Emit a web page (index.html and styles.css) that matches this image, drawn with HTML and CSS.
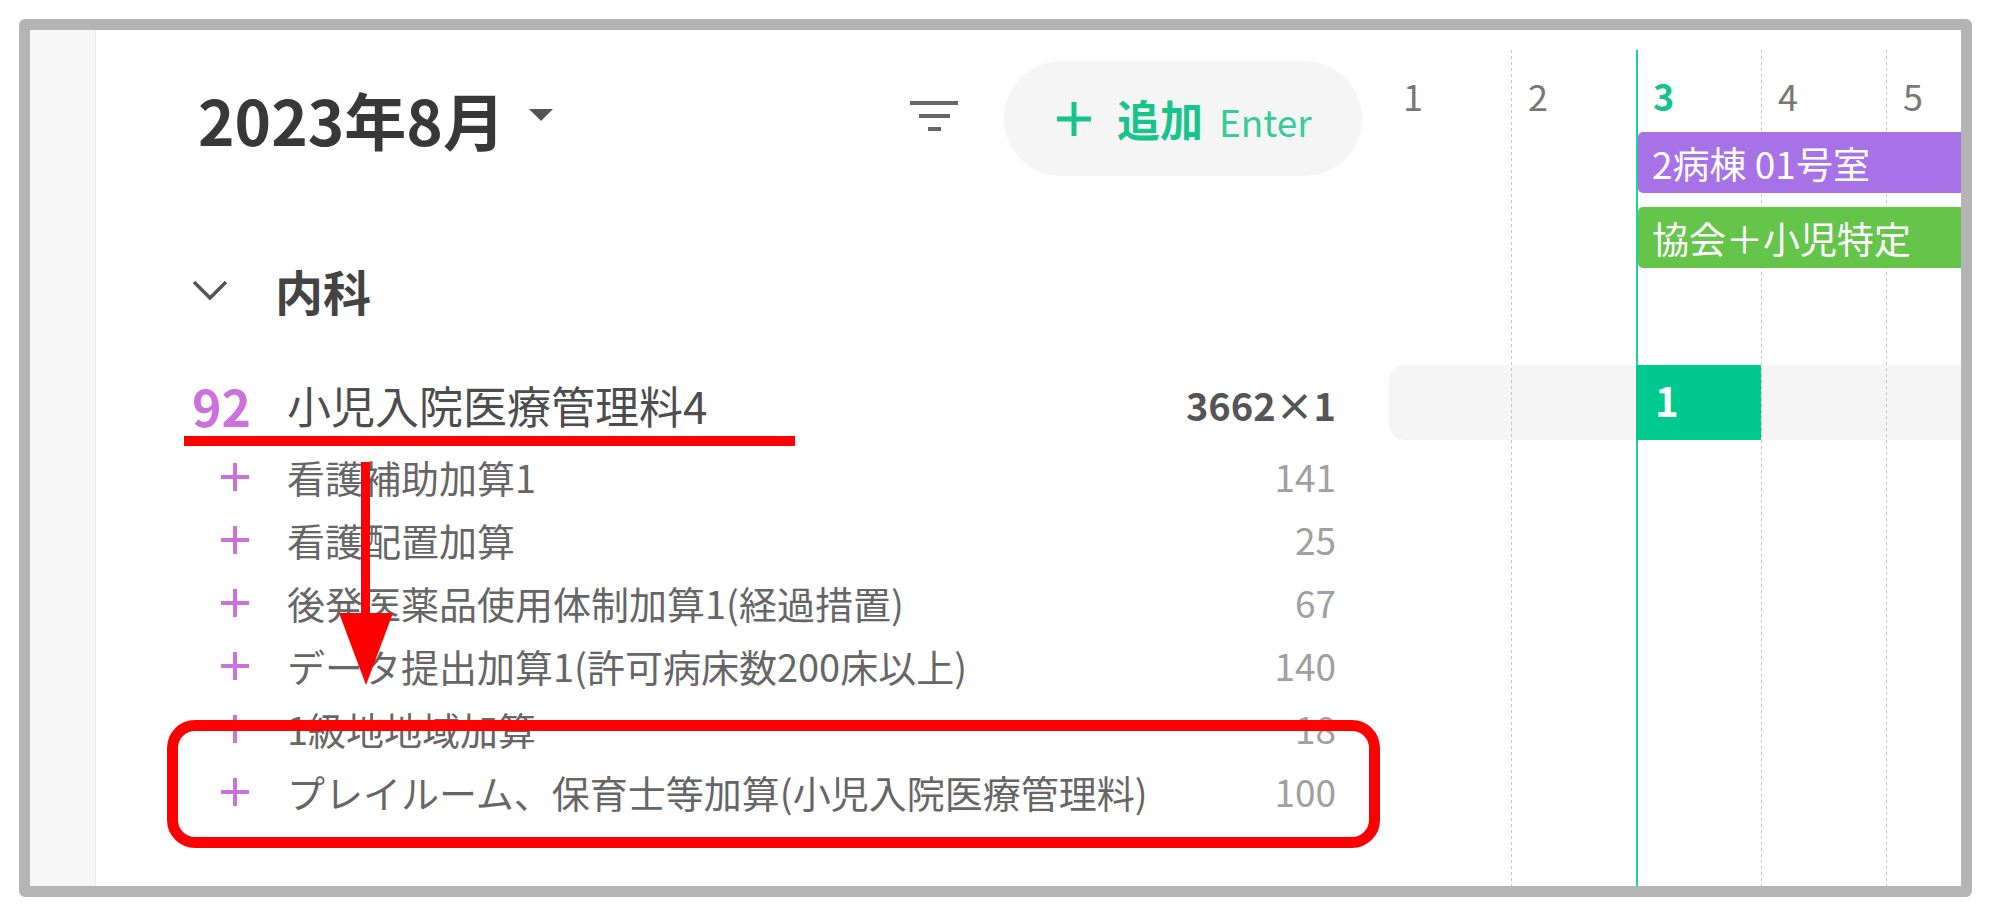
FILE: index.html
```html
<!DOCTYPE html>
<html lang="ja">

<head>
  <meta charset="utf-8">
  <link rel="stylesheet" href="styles.css">
</head>

<body>
  <div class="frame">
    <div class="rail"></div>

    <div class="list">
      <div class="list-header">
        <div class="month">
          <span class="month-label">2023年8月</span>
          <svg class="caret" viewBox="0 0 24 12" width="24" height="12">
            <polygon points="0,0 24,0 12,12" fill="#555" />
          </svg>
        </div>
        <svg class="filter" viewBox="0 0 48 30" width="48" height="30">
          <rect x="0" y="0" width="48" height="4" fill="#666" />
          <rect x="9" y="13" width="31" height="4" fill="#666" />
          <rect x="18" y="26" width="13" height="4" fill="#666" />
        </svg>
        <button class="add-button">
          <svg class="add-plus" viewBox="0 0 38 38" width="38" height="38">
            <path d="M19 2v34M2 19h34" stroke="#18c48c" stroke-width="5" />
          </svg>
          <span class="add-label">追加</span>
          <span class="add-key">Enter</span>
        </button>
      </div>

      <div class="section">
        <svg class="chevron" viewBox="0 0 36 22" width="36" height="22">
          <path d="M2 3l16 16L34 3" fill="none" stroke="#555" stroke-width="3.5" />
        </svg>
        <span class="section-title">内科</span>
      </div>

      <div class="main-row">
        <span class="main-count">92</span>
        <span class="main-name">小児入院医療管理料4</span>
        <span class="main-amount">3662×1</span>
      </div>

      <div class="sub-rows">
        <div class="sub-row">
          <span class="sub-mark"><svg viewBox="0 0 30 30" width="30" height="30"><path d="M15 1v28M1 15h28" stroke="#cc70dc" stroke-width="4" /></svg></span>
          <span class="sub-name">看護補助加算1</span>
          <span class="sub-amount">141</span>
        </div>
        <div class="sub-row">
          <span class="sub-mark"><svg viewBox="0 0 30 30" width="30" height="30"><path d="M15 1v28M1 15h28" stroke="#cc70dc" stroke-width="4" /></svg></span>
          <span class="sub-name">看護配置加算</span>
          <span class="sub-amount">25</span>
        </div>
        <div class="sub-row">
          <span class="sub-mark"><svg viewBox="0 0 30 30" width="30" height="30"><path d="M15 1v28M1 15h28" stroke="#cc70dc" stroke-width="4" /></svg></span>
          <span class="sub-name">後発医薬品使用体制加算1(経過措置)</span>
          <span class="sub-amount">67</span>
        </div>
        <div class="sub-row">
          <span class="sub-mark"><svg viewBox="0 0 30 30" width="30" height="30"><path d="M15 1v28M1 15h28" stroke="#cc70dc" stroke-width="4" /></svg></span>
          <span class="sub-name">データ提出加算1(許可病床数200床以上)</span>
          <span class="sub-amount">140</span>
        </div>
        <div class="sub-row">
          <span class="sub-mark"><svg viewBox="0 0 30 30" width="30" height="30"><path d="M15 1v28M1 15h28" stroke="#cc70dc" stroke-width="4" /></svg></span>
          <span class="sub-name">1級地地域加算</span>
          <span class="sub-amount">18</span>
        </div>
        <div class="sub-row">
          <span class="sub-mark"><svg viewBox="0 0 30 30" width="30" height="30"><path d="M15 1v28M1 15h28" stroke="#cc70dc" stroke-width="4" /></svg></span>
          <span class="sub-name">プレイルーム、保育士等加算(小児入院医療管理料)</span>
          <span class="sub-amount">100</span>
        </div>
      </div>
    </div>

    <div class="calendar">
      <div class="cost-row"></div>

      <div class="vline col-2"></div>
      <div class="vline today col-3"></div>
      <div class="vline col-4"></div>
      <div class="vline col-5"></div>

      <div class="day col-1">1</div>
      <div class="day col-2">2</div>
      <div class="day today-label col-3">3</div>
      <div class="day col-4">4</div>
      <div class="day col-5">5</div>

      <div class="bar bar-room">2病棟 01号室</div>
      <div class="bar bar-insurance">協会＋小児特定</div>

      <div class="cost-cell">1</div>
    </div>

    <div class="mark-underline"></div>
    <svg class="mark-arrow" viewBox="0 0 54 223" width="54" height="223">
      <rect x="22" y="0" width="9" height="155" fill="#ff0000" />
      <polygon points="0,151 54,151 27,223" fill="#ff0000" />
    </svg>
    <div class="mark-box"></div>
  </div>
</body>

</html>
```

FILE: styles.css
```css
body {
  margin: 0;
  width: 2000px;
  height: 921px;
  background: #fff;
  font-family: "Noto Sans CJK JP", "Noto Sans", sans-serif;
  color: #555;
}

.frame {
  position: relative;
  box-sizing: border-box;
  width: 1953px;
  height: 878px;
  margin: 19px 0 0 19px;
  border: 11px solid #b4b4b4;
  border-radius: 6px;
  display: flex;
  overflow: hidden;
  background: #fff;
}

.rail {
  width: 65px;
  flex: 0 0 65px;
  background: #f7f7f7;
  border-right: 1px solid #ececec;
}

/* left list */

.list {
  width: 1290px;
  flex: 0 0 1290px;
  box-sizing: border-box;
  padding: 31px 24px 0 96px;
}

.list-header {
  height: 115px;
  display: flex;
  align-items: center;
  padding-left: 6px;
}

.month {
  display: flex;
  align-items: center;
}

.month-label {
  font-size: 62px;
  font-weight: 700;
  color: #383838;
  line-height: 1;
}

.caret {
  margin-left: 24px;
  margin-top: -8px;
}

.filter {
  margin-left: auto;
  margin-right: 46px;
  margin-top: -6px;
}

.add-button {
  width: 358px;
  height: 115px;
  border: none;
  border-radius: 58px;
  background: #f5f5f5;
  display: flex;
  align-items: center;
  padding: 0 0 0 51px;
  font-family: inherit;
  box-sizing: border-box;
}

.add-label {
  margin-left: 24px;
  font-size: 43px;
  font-weight: 700;
  color: #18c48c;
  line-height: 1;
}

.add-key {
  margin-left: 16px;
  font-size: 37px;
  color: #35cc9a;
  line-height: 1;
  margin-top: 5px;
}

.section {
  display: flex;
  align-items: center;
  height: 60px;
  margin-top: 84px;
}

.chevron {
  width: 36px;
  margin-right: 47px;
}

.section-title {
  font-size: 48px;
  font-weight: 700;
  color: #444;
  line-height: 60px;
}

.main-row {
  display: flex;
  align-items: center;
  height: 70px;
  margin-top: 50px;
  padding-right: 26px;
}

.main-count {
  width: 95px;
  flex: 0 0 95px;
  font-size: 50px;
  font-weight: 700;
  color: #cc70dc;
  line-height: 70px;
}

.main-name {
  font-size: 44px;
  color: #4d4d4d;
  line-height: 70px;
}

.main-amount {
  margin-left: auto;
  font-size: 38px;
  font-weight: 700;
  color: #555;
  line-height: 70px;
}

.sub-rows {
  margin-top: 5px;
  padding-right: 26px;
}

.sub-row {
  display: flex;
  align-items: center;
  height: 63px;
}

.sub-mark {
  width: 95px;
  flex: 0 0 95px;
  display: flex;
  align-items: center;
}

.sub-mark svg {
  margin-left: 28px;
}

.sub-name {
  font-size: 38px;
  color: #666;
  line-height: 63px;
}

.sub-amount {
  margin-left: auto;
  font-size: 37px;
  color: #a0a0a0;
  line-height: 63px;
}

/* calendar */

.calendar {
  flex: 1;
  min-width: 0;
  overflow: hidden;
  padding-top: 20px;
  display: grid;
  grid-template-columns: repeat(5, 125px);
  grid-template-rows: 82px 61px 14px 61px 97px 75px 1fr;
}

.col-1 { grid-column: 1; }
.col-2 { grid-column: 2; }
.col-3 { grid-column: 3; }
.col-4 { grid-column: 4; }
.col-5 { grid-column: 5; }

.vline {
  grid-row: 1 / -1;
  justify-self: start;
  width: 1px;
  background: repeating-linear-gradient(to bottom, #c4c4c4 0 3px, transparent 3px 6px);
}

.vline.today {
  width: 2px;
  background: #1fcf9c;
}

.day {
  grid-row: 1;
  padding: 20px 0 0 17px;
  font-size: 36px;
  line-height: 50px;
  color: #777;
}

.day.today-label {
  color: #14c38f;
  font-weight: 700;
}

.bar {
  grid-column: 3 / -1;
  margin-left: 2px;
  border-radius: 5px 0 0 5px;
  padding-left: 14px;
  display: flex;
  align-items: center;
  font-size: 37px;
  color: #fff;
}

.bar-room {
  grid-row: 2;
  background: #a772e8;
}

.bar-insurance {
  grid-row: 4;
  background: #65c54b;
}

.cost-row {
  grid-row: 6;
  grid-column: 1 / -1;
  margin-left: 3px;
  background: #f5f5f5;
  border-radius: 16px 0 0 16px;
}

.cost-cell {
  grid-row: 6;
  grid-column: 3;
  background: #00c98f;
  color: #fff;
  font-size: 40px;
  font-weight: 700;
  line-height: 70px;
  padding-left: 19px;
}

/* red annotations over the screenshot */

.mark-underline {
  position: absolute;
  left: 154px;
  top: 406px;
  width: 611px;
  height: 10px;
  background: #ff0000;
}

.mark-arrow {
  position: absolute;
  left: 309px;
  top: 432px;
}

.mark-box {
  position: absolute;
  left: 137px;
  top: 690px;
  width: 1213px;
  height: 128px;
  box-sizing: border-box;
  border: 11px solid #ff0000;
  border-radius: 28px;
}
```
